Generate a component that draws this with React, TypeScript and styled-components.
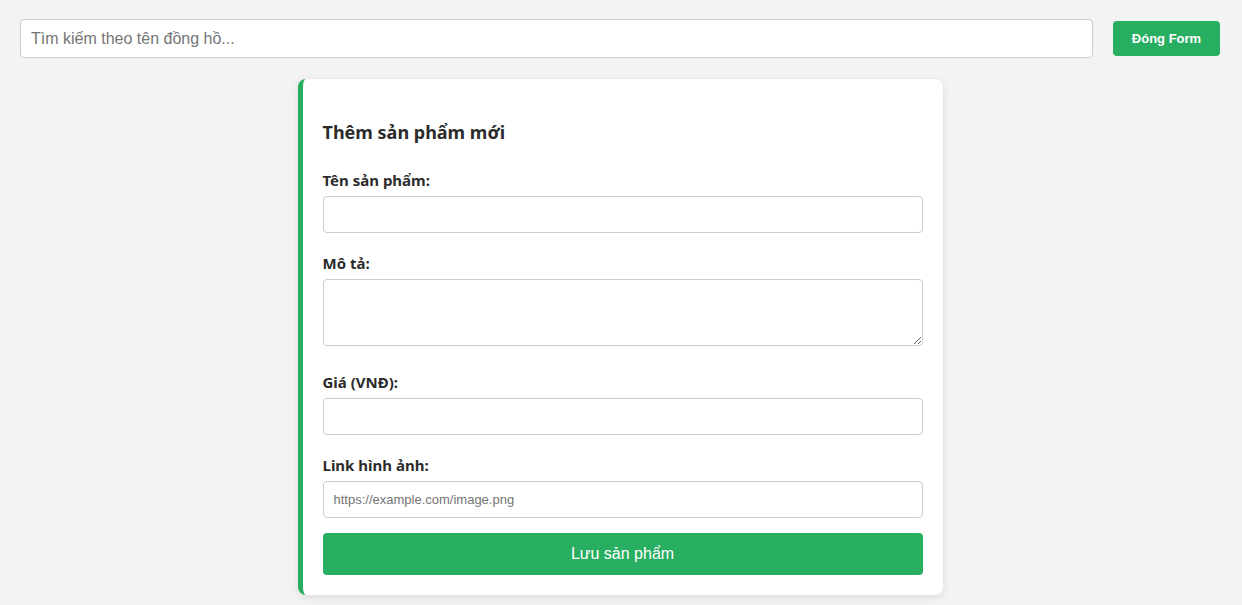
import styled, { createGlobalStyle } from 'styled-components'

const GlobalStyle = createGlobalStyle`
    body {
        margin: 0;
        background: #f3f3f3;
        font-family: "Liberation Sans", Arial, sans-serif;
    }
    * {
        box-sizing: border-box;
    }
`

const fields = [
    { label: 'Tên sản phẩm:', kind: 'input', placeholder: '' },
    { label: 'Mô tả:', kind: 'textarea', placeholder: '' },
    { label: 'Giá (VNĐ):', kind: 'input', placeholder: '' },
    { label: 'Link hình ảnh:', kind: 'input', placeholder: 'https://example.com/image.png' },
]

export default function App() {
    return (
        <>
            <GlobalStyle />
            <Page>
                <TopBar>
                    <Search placeholder="Tìm kiếm theo tên đồng hồ..." />
                    <CloseBtn>Đóng Form</CloseBtn>
                </TopBar>
                <Card>
                    <Title>Thêm sản phẩm mới</Title>
                    {fields.map((f) => (
                        <Group key={f.label} $wide={f.kind === 'textarea'}>
                            <Label>{f.label}</Label>
                            {f.kind === 'textarea'
                                ? <Area />
                                : <Field placeholder={f.placeholder} />}
                        </Group>
                    ))}
                    <SaveBtn>Lưu sản phẩm</SaveBtn>
                </Card>
            </Page>
        </>
    )
}

const Page = styled.div`
    padding: 19px 22px 10px 20px;
`

const TopBar = styled.div`
    display: flex;
    align-items: center;
    gap: 20px;
`

const Search = styled.input`
    flex: 1;
    height: 39px;
    padding: 0 10px;
    border: 1px solid #cccccc;
    border-radius: 4px;
    background: #fff;
    font-family: "Liberation Sans", Arial, sans-serif;
    font-size: 16px;
    outline: none;
    &::placeholder {
        color: #757575;
    }
`

const CloseBtn = styled.button`
    width: 107px;
    height: 35px;
    border: none;
    border-radius: 4px;
    background: #27ae60;
    color: #fff;
    font-family: "Liberation Sans", Arial, sans-serif;
    font-size: 13px;
    font-weight: 700;
`

const Card = styled.div`
    width: 645px;
    margin: 21px auto 0;
    padding: 42px 20px 20px 20px;
    background: #fff;
    border-left: 5px solid #27ae60;
    border-radius: 8px;
    box-shadow: 0 2px 8px rgba(0, 0, 0, 0.1);
`

const Title = styled.h3`
    margin: 0 0 27px 0;
    font-family: "Noto Sans", "Open Sans", sans-serif;
    font-size: 18px;
    line-height: 22px;
    font-weight: 700;
    color: #2b2b2b;
`

const Group = styled.div<{ $wide: boolean }>`
    display: flex;
    flex-direction: column;
    margin-bottom: ${props => props.$wide ? 26 : 20}px;
    &:last-of-type {
        margin-bottom: 15px;
    }
`

const Label = styled.label`
    margin-bottom: 6px;
    font-family: "Noto Sans", "Open Sans", sans-serif;
    font-size: 15px;
    line-height: 20px;
    font-weight: 700;
    color: #2b2b2b;
`

const Field = styled.input`
    width: 100%;
    height: 37px;
    padding: 0 10px;
    border: 1px solid #cccccc;
    border-radius: 4px;
    font-family: "Liberation Sans", Arial, sans-serif;
    font-size: 13px;
    outline: none;
    &::placeholder {
        color: #757575;
    }
`

const Area = styled.textarea`
    width: 100%;
    height: 67px;
    padding: 8px 10px;
    border: 1px solid #cccccc;
    border-radius: 4px;
    font-family: "Liberation Sans", Arial, sans-serif;
    font-size: 13px;
    outline: none;
`

const SaveBtn = styled.button`
    width: 100%;
    height: 42px;
    border: none;
    border-radius: 4px;
    background: #27ae60;
    color: #fff;
    font-family: "Liberation Sans", Arial, sans-serif;
    font-size: 16px;
`
